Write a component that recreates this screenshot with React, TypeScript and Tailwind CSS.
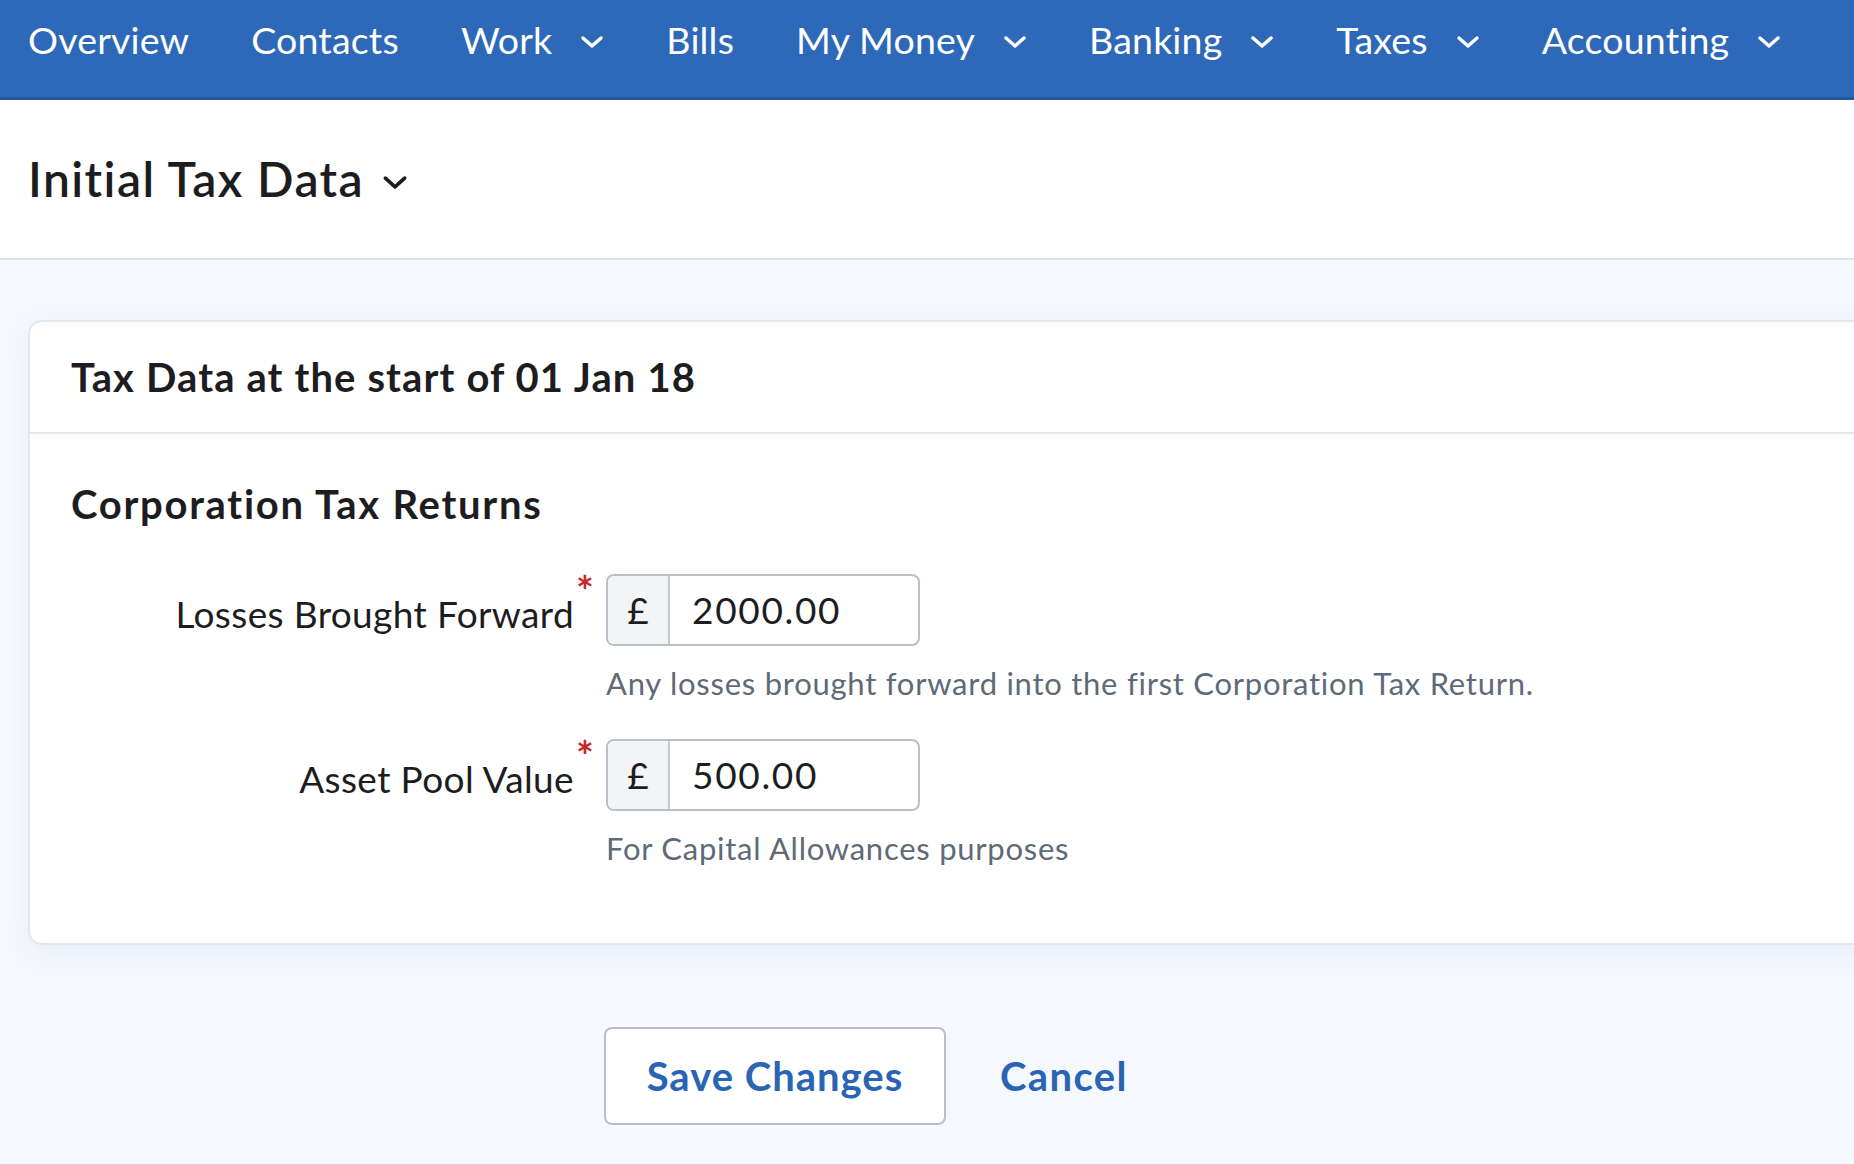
import React from "react";

const Chevron = ({ className }: { className?: string }) => (
  <svg viewBox="0 0 24 14" className={className} fill="none">
    <path d="M3 3 L12 11 L21 3" stroke="currentColor" strokeWidth="3.4" strokeLinecap="round" strokeLinejoin="round" />
  </svg>
);

const navItems: { label: string; dd: boolean }[] = [
  { label: "Overview", dd: false },
  { label: "Contacts", dd: false },
  { label: "Work", dd: true },
  { label: "Bills", dd: false },
  { label: "My Money", dd: true },
  { label: "Banking", dd: true },
  { label: "Taxes", dd: true },
  { label: "Accounting", dd: true },
];

const Field = ({ label, value, help }: { label: string; value: string; help: string }) => (
  <div className="grid grid-cols-[560px_1fr] gap-x-[16px]">
    <div className="flex h-[72px] items-center justify-end">
      <span className="pt-[6px] text-[37px] leading-none tracking-[0.01em] text-[#1d1d1f]">{label}</span>
      <span className="mt-[-4px] ml-[2px] w-[14px] self-start text-[42px] font-bold leading-none text-[#c62828]">*</span>
    </div>
    <div>
      <div className="flex h-[72px] w-[314px] overflow-hidden rounded-[8px] border-2 border-[#bac0c9] bg-white">
        <div className="flex w-[62px] items-center justify-center border-r-2 border-[#c4c9d1] bg-[#f3f4f6] text-[37px] text-[#1d1d1f]">£</div>
        <div className="flex items-center pl-[22px] text-[37px] tracking-[0.045em] text-[#1d1d1f]">{value}</div>
      </div>
      <div className="mt-[17px] h-[40px] text-[31px] leading-[40px] tracking-[0.024em] text-[#5e6a78]">{help}</div>
    </div>
  </div>
);

export default function App() {
  return (
    <div className="min-h-screen overflow-hidden bg-[#f5f8fd]" style={{ fontFamily: "Lato, 'Noto Sans', sans-serif" }}>
      <nav className="flex h-[100px] items-start border-b-[3px] border-[#22569f] bg-[#2d68b9] px-[28px] text-white">
        <div className="flex h-[80px] items-center gap-[62px]">
          {navItems.map((it) => (
            <div key={it.label} className="flex items-center gap-[28px]">
              <span className="text-[37.5px] leading-none tracking-[0.005em]">{it.label}</span>
              {it.dd && <Chevron className="mt-[4px] h-[14px] w-[24px]" />}
            </div>
          ))}
        </div>
      </nav>
      <header className="flex h-[160px] items-center border-b-2 border-[#e1e4ea] bg-white px-[28px]">
        <h1 className="text-[48px] font-semibold leading-none tracking-[0.03em] text-[#1d1d1f]">Initial Tax Data</h1>
        <Chevron className="ml-[18px] mt-[6px] h-[15px] w-[26px] text-[#1d1d1f]" />
      </header>
      <main className="pl-[28px] pt-[60px]">
        <section className="mr-[-40px] rounded-[14px] border-2 border-[#e2e6ee] bg-white shadow-[0_8px_24px_rgba(210,220,240,0.35)]">
          <div className="flex h-[112px] items-center border-b-2 border-[#e2e6ee] pl-[41px]">
            <h2 className="text-[40px] font-bold leading-none tracking-[0.028em] text-[#1d1d1f]">Tax Data at the start of 01 Jan 18</h2>
          </div>
          <div className="pb-[70px] pl-[41px] pt-[46px]">
            <h3 className="text-[40px] font-bold leading-[48px] tracking-[0.043em] text-[#1d1d1f]">Corporation Tax Returns</h3>
          </div>
          <div className="-mt-[24px] pb-[75px]">
            <Field label="Losses Brought Forward" value="2000.00" help="Any losses brought forward into the first Corporation Tax Return." />
            <div className="h-[36px]" />
            <Field label="Asset Pool Value" value="500.00" help="For Capital Allowances purposes" />
          </div>
        </section>
        <div className="flex items-center gap-[54px] pl-[576px] pt-[82px] pb-[40px]">
          <button className="h-[98px] w-[342px] rounded-[8px] border-2 border-[#b9bfc8] bg-white text-[40px] font-bold tracking-[0.025em] text-[#2a64b5]">Save Changes</button>
          <button className="text-[40px] font-bold tracking-[0.035em] text-[#2a64b5]">Cancel</button>
        </div>
      </main>
    </div>
  );
}
